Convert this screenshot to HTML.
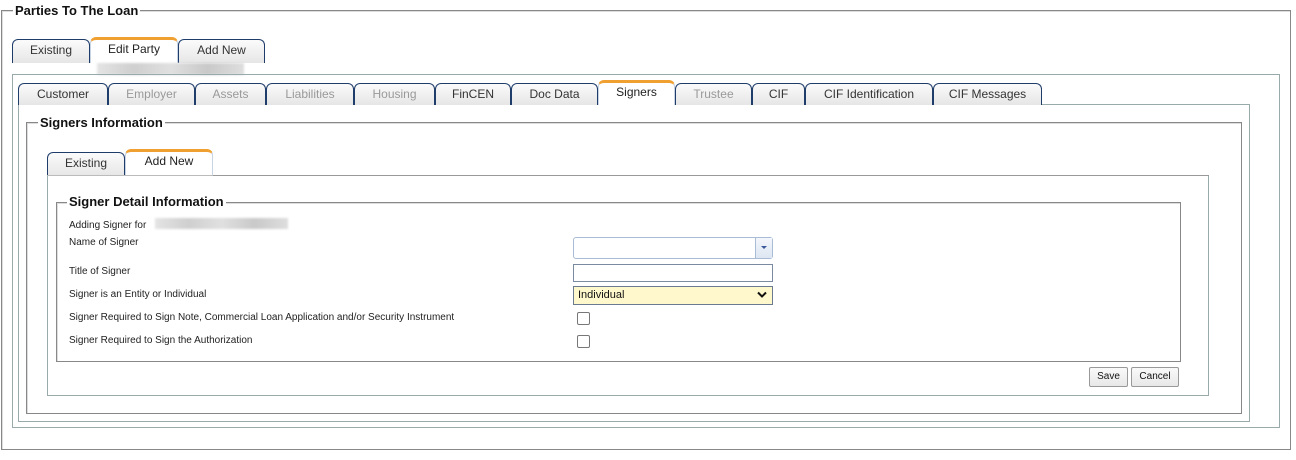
<!DOCTYPE html>
<html><head><style>
body{margin:0;width:1296px;height:460px;background:#fff;font-family:"Liberation Sans",sans-serif;position:relative;overflow:hidden}
.a{position:absolute;box-sizing:border-box}
.fs{border:1px solid #888;box-shadow:inset 1px 1px 0 #ddd}
.lg{position:absolute;background:#fff;font-weight:bold;color:#111;padding:0 2px;white-space:nowrap}
.tab{position:absolute;box-sizing:border-box;border:1px solid #1f3d6b;border-bottom:none;border-radius:6px 6px 0 0;background:linear-gradient(#fbfbfb,#e6e6e6);font-size:12px;text-align:center;color:#333;line-height:20px}
.tab.d{color:#999}
.tab.on{background:#fff;border:1px solid #c8d4e4;border-bottom:none;border-top:3px solid #f0a030;line-height:18px;color:#222}
.lbl{position:absolute;left:69px;font-size:10px;color:#222}
.btn{position:absolute;box-sizing:border-box;border:1px solid #999;border-radius:2px;background:linear-gradient(#fafafa,#e8e8e8);font-size:10px;text-align:center;line-height:17px;color:#111}
.cb{position:absolute;left:577px;width:13px;height:13px;border:1px solid #777;border-radius:2px;box-sizing:border-box}
.blur{position:absolute;background:linear-gradient(90deg,#e4e4e4,#cfcfcf,#e0e0e0,#c9c9c9,#dedede);filter:blur(1px)}
</style></head><body>
<div class="a fs" style="left:1px;top:10px;width:1290px;height:440px"></div>
<div class="lg" style="left:13px;top:3px;font-size:13px">Parties To The Loan</div>

<div class="tab" style="left:12px;top:39px;width:78px;height:24px">Existing</div>
<div class="tab on" style="left:90px;top:37px;width:88px;height:26px">Edit Party</div>
<div class="tab" style="left:178px;top:39px;width:87px;height:24px">Add New</div>
<div class="blur" style="left:97px;top:63px;width:147px;height:12px"></div>

<div class="a" style="left:12px;top:74px;width:1268px;height:354px;border:1px solid #9aa"></div>
<div class="a" style="left:18px;top:104px;width:1232px;height:318px;border:1px solid #9aa"></div>

<div class="tab" style="left:18px;top:83px;width:90px;height:22px">Customer</div>
<div class="tab d" style="left:108px;top:83px;width:87px;height:22px">Employer</div>
<div class="tab d" style="left:195px;top:83px;width:71px;height:22px">Assets</div>
<div class="tab d" style="left:266px;top:83px;width:88px;height:22px">Liabilities</div>
<div class="tab d" style="left:354px;top:83px;width:81px;height:22px">Housing</div>
<div class="tab" style="left:435px;top:83px;width:76px;height:22px">FinCEN</div>
<div class="tab" style="left:511px;top:83px;width:87px;height:22px">Doc Data</div>
<div class="tab on" style="left:598px;top:80px;width:77px;height:25px;background:#fff">Signers</div>
<div class="tab d" style="left:675px;top:83px;width:77px;height:22px">Trustee</div>
<div class="tab" style="left:752px;top:83px;width:53px;height:22px">CIF</div>
<div class="tab" style="left:805px;top:83px;width:128px;height:22px">CIF Identification</div>
<div class="tab" style="left:933px;top:83px;width:109px;height:22px">CIF Messages</div>

<div class="a fs" style="left:26px;top:122px;width:1216px;height:292px"></div>
<div class="lg" style="left:38px;top:115px;font-size:13px">Signers Information</div>

<div class="tab" style="left:47px;top:152px;width:78px;height:24px">Existing</div>
<div class="tab on" style="left:125px;top:149px;width:88px;height:27px">Add New</div>
<div class="a" style="left:47px;top:175px;width:1162px;height:221px;border:1px solid #9aa;border-top-color:#bbb"></div>
<div class="a" style="left:213px;top:175px;width:996px;height:1px;background:#999"></div>

<div class="a fs" style="left:56px;top:202px;width:1125px;height:160px"></div>
<div class="lg" style="left:67px;top:194px;font-size:13px">Signer Detail Information</div>

<div class="lbl" style="top:220px">Adding Signer for</div>
<div class="blur" style="left:155px;top:218px;width:133px;height:11px"></div>
<div class="lbl" style="top:237px">Name of Signer</div>
<div class="lbl" style="top:266px">Title of Signer</div>
<div class="lbl" style="top:289px">Signer is an Entity or Individual</div>
<div class="lbl" style="top:312px">Signer Required to Sign Note, Commercial Loan Application and/or Security Instrument</div>
<div class="lbl" style="top:335px">Signer Required to Sign the Authorization</div>

<div class="a" style="left:573px;top:237px;width:200px;height:22px;border:1px solid #a8bcd8;border-radius:3px"></div>
<div class="a" style="left:755px;top:238px;width:17px;height:20px;border-left:1px solid #a8bcd8;background:linear-gradient(#f4f7fb,#dde6f2)"><div style="position:absolute;left:5px;top:8px;width:0;height:0;border-left:3px solid transparent;border-right:3px solid transparent;border-top:3px solid #3c5a9a"></div></div>
<div class="a" style="left:573px;top:264px;width:200px;height:18px;border:1px solid #7a8aa0"></div>
<div class="a" style="left:573px;top:286px;width:200px;height:19px;border:1px solid #6a7a90;background:#fff8cc;font-size:11px;line-height:17px;padding-left:4px;color:#111">Individual</div>
<svg class="a" style="left:757px;top:291px" width="10" height="8"><path d="M1 1.5 L5 5.5 L9 1.5" stroke="#111" stroke-width="2" fill="none"/></svg>
<div class="cb" style="top:312px"></div>
<div class="cb" style="top:335px"></div>

<div class="btn" style="left:1089px;top:367px;width:39px;height:20px">Save</div>
<div class="btn" style="left:1131px;top:367px;width:48px;height:20px">Cancel</div>
</body></html>
